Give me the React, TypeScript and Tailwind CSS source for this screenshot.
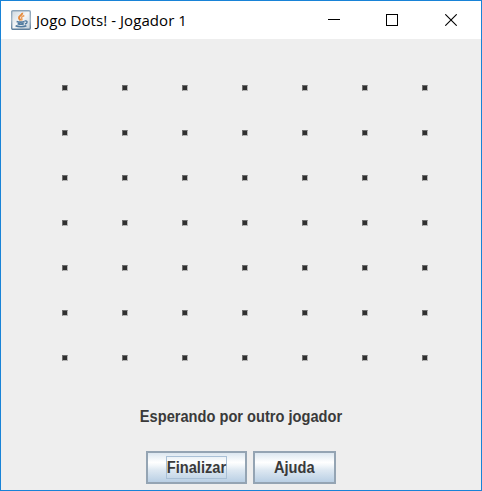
const ROWS = 7;
const COLS = 7;

function JavaIcon() {
  return (
    <svg width="20" height="20" viewBox="0 0 20 20" className="shrink-0">
      <defs>
        <linearGradient id="tile" x1="0" y1="0" x2="0" y2="1">
          <stop offset="0" stopColor="#8ba3b8" />
          <stop offset="0.5" stopColor="#a3b5c4" />
          <stop offset="1" stopColor="#5f7f9c" />
        </linearGradient>
        <linearGradient id="face" x1="0" y1="0" x2="1" y2="1">
          <stop offset="0" stopColor="#cfd8df" />
          <stop offset="0.5" stopColor="#f5f6f7" />
          <stop offset="1" stopColor="#c3d0da" />
        </linearGradient>
      </defs>
      <rect x="0.7" y="0.7" width="18.6" height="18.6" rx="1.2" fill="url(#face)" stroke="url(#tile)" strokeWidth="1.4" />
      <path d="M11.3 2.8C11.8 5.2 7.4 5.8 8 8c.2.9 1 1.4 1.7 2.4" fill="none" stroke="#e58a3c" strokeWidth="2" />
      <path d="M13.3 5.4c-2 .9-3.4 1.7-2.6 3 .5.8.3 1.3-.3 2" fill="none" stroke="#eda15f" strokeWidth="1.6" />
      <path d="M5.6 11.5c2 .7 6 .7 8 0M6.6 13.6c1.8.6 4.5.6 6.2 0" fill="none" stroke="#527b9f" strokeWidth="1.7" />
      <path d="M13.7 11c3.2-.8 3.2 2.4.2 3" fill="none" stroke="#527b9f" strokeWidth="1.3" />
      <path d="M4.6 15.8c2.5 1.2 8.4 1.2 10.8 0" fill="none" stroke="#527b9f" strokeWidth="1.6" />
    </svg>
  );
}

function TitleBar() {
  return (
    <header className="flex h-[38px] shrink-0 items-center bg-white pl-[10px]">
      <JavaIcon />
      <h1 className="ml-[5px] flex-1 whitespace-nowrap pb-px font-['Open_Sans',sans-serif] text-[15px] leading-5 tracking-[0.07px] text-black">
        Jogo Dots! - Jogador 1
      </h1>
      <div className="flex h-full items-center">
        <button aria-label="Minimizar" className="flex h-full w-[58px] items-center justify-center">
          <svg width="12" height="12" viewBox="0 0 12 12" shapeRendering="crispEdges">
            <path d="M0 5.5h12" stroke="#000" />
          </svg>
        </button>
        <button aria-label="Maximizar" className="flex h-full w-[58px] items-center justify-center">
          <svg width="12" height="12" viewBox="0 0 12 12" shapeRendering="crispEdges">
            <path d="M.5.5h11v11H.5z" fill="none" stroke="#000" />
          </svg>
        </button>
        <button aria-label="Fechar" className="flex h-full w-[60px] items-center justify-center">
          <svg width="12" height="12" viewBox="0 0 12 12">
            <path d="M.3.3l11.4 11.4M11.7.3L.3 11.7" stroke="#000" strokeWidth="1.1" />
          </svg>
        </button>
      </div>
    </header>
  );
}

function Board() {
  return (
    <div className="ml-[61px] mt-[46px] grid grid-cols-[repeat(7,60px)] grid-rows-[repeat(7,45px)]">
      {Array.from({ length: ROWS * COLS }, (_, i) => (
        <span
          key={i}
          className="size-[6px] border border-t-[#6e6e6e] border-l-[#6e6e6e] border-r-[#b5b5b5] border-b-[#b5b5b5] bg-[#303030]"
        />
      ))}
    </div>
  );
}

const buttonStyle =
  "flex h-[33px] items-center justify-center border-2 border-[#94a4b3] bg-[linear-gradient(180deg,#dce7f0_0%,#ffffff_32%,#f4f8fb_42%,#dce7f1_60%,#b9cfe4_100%)] font-['Liberation_Sans',Arial,sans-serif] text-[16px] font-bold leading-5 text-[#3a3a3a]";

export default function App() {
  return (
    <main className="flex h-[491px] w-[482px] flex-col overflow-hidden border border-[#1883d7] bg-[#eeeeee]">
      <TitleBar />
      <Board />
      <p className="mt-[7px] scale-x-[0.914] whitespace-nowrap text-center font-['Liberation_Sans',Arial,sans-serif] text-[16px] font-bold leading-5 text-[#3a3a3a]">
        Esperando por outro jogador
      </p>
      <div className="ml-[145px] mt-[24px] flex gap-[6px]">
        <button className={`${buttonStyle} w-[101px]`}>
          <span className="flex h-[23px] w-[61px] items-center justify-center border border-[#a9c0d6]">
            <span className="scale-x-[0.914]">Finalizar</span>
          </span>
        </button>
        <button className={`${buttonStyle} w-[83px]`}>
          <span className="scale-x-[0.914]">Ajuda</span>
        </button>
      </div>
    </main>
  );
}
